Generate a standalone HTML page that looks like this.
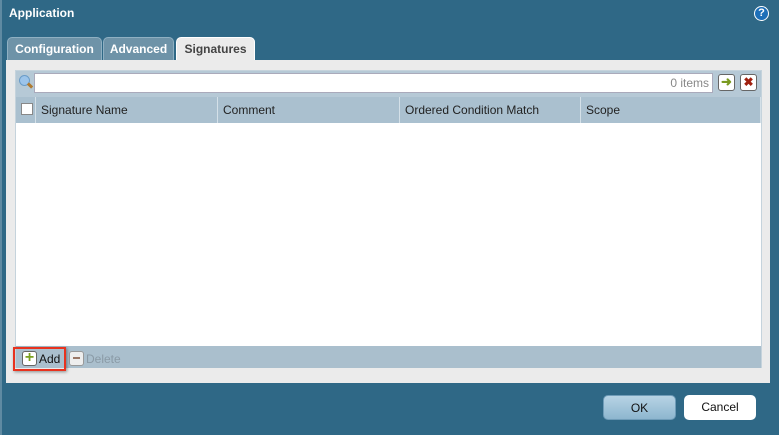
<!DOCTYPE html><html><head><style>
body{margin:0;width:779px;height:435px;background:#2f6886;font-family:"Liberation Sans",sans-serif;position:relative;overflow:hidden}
.a{position:absolute}
.tab{position:absolute;top:37px;height:23px;border-radius:5px 5px 0 0;font-weight:bold;font-size:12px;line-height:23px;text-align:center;color:#fff;background:#6e93a8;border:1px solid #8fb0c2;border-bottom:none;box-sizing:border-box}
.th{position:absolute;top:97px;height:26px;line-height:26px;font-size:12px;color:#222;border-right:1px solid #d4e0e8;box-sizing:border-box;padding-left:6px}
.btn{position:absolute;top:395px;height:25px;line-height:25px;text-align:center;font-size:12px;border-radius:5px;box-sizing:border-box}
</style></head><body>
<div class="a" style="left:0;top:0;width:2px;height:435px;background:#5f8aa2"></div>
<div class="a" style="left:9px;top:6px;color:#fff;font-weight:bold;font-size:12px">Application</div>
<div class="a" style="left:754px;top:6px;width:15px;height:15px;border-radius:50%;background:#1d6fb8;border:1px solid #fff;box-sizing:border-box;color:#fff;font-weight:bold;font-size:11px;line-height:13px;text-align:center">?</div>
<div class="tab" style="left:7px;width:95px">Configuration</div>
<div class="tab" style="left:103px;width:71px">Advanced</div>
<div class="tab" style="left:176px;width:79px;background:#ebebeb;color:#444;border-color:#fff;height:24px">Signatures</div>
<div class="a" style="left:6px;top:60px;width:764px;height:323px;background:#ebebeb"></div>
<div class="a" style="left:15px;top:70px;width:747px;height:298px;background:#fff;border:1px solid #c5d3dc;box-sizing:border-box"></div>
<div class="a" style="left:16px;top:71px;width:745px;height:26px;background:#b6c9d6"></div>
<div class="a" style="left:19px;top:75px;width:11px;height:11px;border-radius:50%;background:#9cc4ea;border:1px solid #6a9cc8;box-sizing:border-box"></div>
<div class="a" style="left:27px;top:84px;width:6px;height:3px;background:#b07a30;transform:rotate(45deg)"></div>
<div class="a" style="left:34px;top:73px;height:20px;background:#fff;border:1px solid #aab;box-sizing:border-box;width:679px"></div>
<div class="a" style="left:600px;top:76px;width:109px;text-align:right;font-size:12px;color:#888">0 items</div>
<div class="a" style="left:718px;top:74px;width:17px;height:17px;border:1px solid #666;border-radius:3px;background:#fff;box-sizing:border-box;color:#7a9a20;font-size:13px;line-height:14px;text-align:center;font-weight:bold">➜</div>
<div class="a" style="left:740px;top:74px;width:17px;height:17px;border:1px solid #666;border-radius:3px;background:#fff;box-sizing:border-box;color:#a02010;font-size:12px;line-height:15px;text-align:center;font-weight:bold">✖</div>
<div class="a" style="left:16px;top:97px;width:745px;height:26px;background:#aac0cf"></div>
<div class="a" style="left:21px;top:103px;width:12px;height:12px;background:#fff;border:1px solid #888;box-sizing:border-box"></div>
<div class="a" style="left:35px;top:97px;width:1px;height:26px;background:#d4e0e8"></div>
<div class="th" style="left:35px;width:183px">Signature Name</div>
<div class="th" style="left:217px;width:183px">Comment</div>
<div class="th" style="left:399px;width:182px">Ordered Condition Match</div>
<div class="th" style="left:580px;width:181px">Scope</div>
<div class="a" style="left:16px;top:346px;width:745px;height:22px;background:#aabfcd"></div>
<div class="a" style="left:13px;top:347px;width:53px;height:24px;border:2px solid #e8321e;box-sizing:border-box;box-shadow:1px 1px 3px rgba(0,0,0,.4)"></div>
<div class="a" style="left:22px;top:351px;width:15px;height:15px;border:1px solid #666;border-radius:3px;background:#fff;box-sizing:border-box;color:#7aa020;font-weight:bold;font-size:16px;line-height:12px;text-align:center">+</div>
<div class="a" style="left:39px;top:352px;font-size:12px;color:#111">Add</div>
<div class="a" style="left:69px;top:351px;width:15px;height:15px;border:1px solid #999;border-radius:3px;background:#eee;box-sizing:border-box"><div class="a" style="left:3px;top:5px;width:7px;height:2px;background:#976"></div></div>
<div class="a" style="left:86px;top:352px;font-size:12px;color:#8a9aa6">Delete</div>
<div class="btn" style="left:603px;width:73px;background:linear-gradient(#b7d3e4,#8db6cf);border:1px solid #6f9cb8;color:#111">OK</div>
<div class="btn" style="left:684px;width:72px;background:#fff;color:#111">Cancel</div>
</body></html>
